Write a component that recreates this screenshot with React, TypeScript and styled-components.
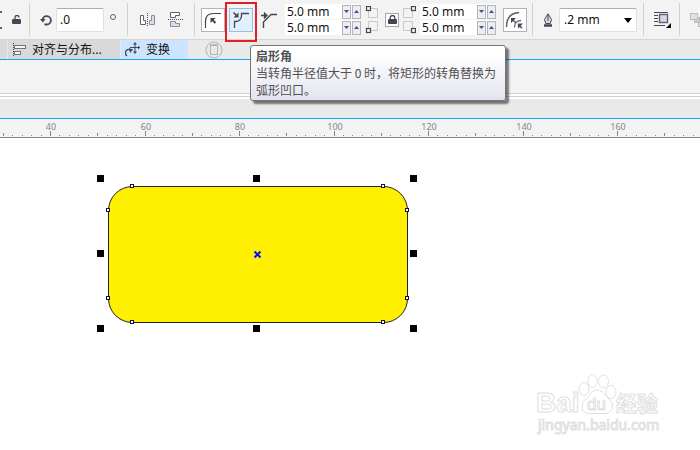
import React, { useEffect, useState } from 'react';
import styled, { createGlobalStyle } from 'styled-components';

const GlobalStyle = createGlobalStyle`
  *, *::before, *::after { box-sizing: border-box; }
  body { margin: 0; background: #fff; }
  svg { display: block; flex: none; }
  button, input, select { font: inherit; color: inherit; margin: 0; }
`;

const Page = styled.div`
  position: relative;
  display: flex;
  flex-direction: column;
  min-height: 100vh;
  overflow: hidden;
  color: #111;
  font-family: 'Noto Sans', 'Noto Sans CJK SC', sans-serif;
  font-size: 12px;
`;

const Toolbar = styled.header`
  display: flex;
  height: 40px;
  background: #f3f3f3;
  border-bottom: 1px solid #d4d4d4;
`;

const Group = styled.div<{ $left?: number; $right?: number; $gap?: number; $last?: boolean }>`
  position: relative;
  display: flex;
  flex: none;
  align-items: center;
  gap: ${(p) => p.$gap ?? 4}px;
  padding: 0 ${(p) => (p.$right ?? 10) + 1}px 0 ${(p) => p.$left ?? 10}px;

  &::after {
    content: '';
    position: absolute;
    display: ${(p) => (p.$last ? 'none' : 'block')};
    right: 0;
    top: 3px;
    bottom: 3px;
    width: 1px;
    background: #d2d2d2;
  }
`;

const Cluster = styled.div`
  display: flex;
  align-items: center;
  gap: 7px;
`;

const IconButton = styled.button`
  display: flex;
  flex: none;
  padding: 0;
  border: 0;
  background: none;
`;

const CornerButton = styled.button<{ $look?: 'framed' | 'active' | 'plain' }>`
  display: grid;
  place-items: center;
  flex: none;
  width: 24px;
  height: 24px;
  padding: 0;
  border: 1px solid
    ${(p) => (p.$look === 'active' ? '#90c0e8' : p.$look === 'framed' ? '#b4b4b8' : 'transparent')};
  background: ${(p) => (p.$look === 'active' ? '#e2f0fd' : p.$look === 'framed' ? '#fff' : 'none')};
`;

const Highlight = styled.div`
  position: relative;

  &::after {
    content: '';
    position: absolute;
    left: -4px;
    right: -4px;
    top: -6px;
    bottom: -10px;
    border: 2px solid #e81c24;
    pointer-events: none;
  }
`;

const AngleInput = styled.input`
  width: 48px;
  height: 24px;
  padding: 0 3px;
  border: 1px solid #dde1e6;
  border-top-color: #aaadb4;
  border-radius: 2px;
  background: #fff;
`;

const SpinStack = styled.div`
  display: flex;
  flex-direction: column;
  gap: 1px;
  width: 76px;
`;

const Spin = styled.div`
  display: flex;
  align-items: center;
  gap: 1px;
  height: 15px;
  background: #fff;

  input {
    flex: 1;
    min-width: 0;
    height: 15px;
    padding: 0 0 0 2px;
    border: 0;
    background: none;
  }

  button {
    display: grid;
    place-items: center;
    width: 9px;
    height: 14px;
    padding: 0;
    border: 1px solid #b4b4bc;
    background: #eeeef2;
  }
`;

const LockButton = styled.button`
  display: grid;
  place-items: center;
  width: 14px;
  height: 14px;
  padding: 0;
  border: 1px solid #a6a6ac;
  background: #fff;
`;

const SelectBox = styled.div`
  position: relative;

  select {
    display: block;
    width: 78px;
    height: 24px;
    padding: 0 20px 0 4px;
    appearance: none;
    border: 1px solid #dde1e6;
    border-top-color: #aaadb4;
    border-radius: 2px;
    background: #fff;
  }

  svg {
    position: absolute;
    right: 5px;
    top: 10px;
    pointer-events: none;
  }
`;

const TabBar = styled.nav`
  display: flex;
  align-items: stretch;
  height: 20px;
  background: #e9e9e9;
  border-bottom: 1px solid #18a4ee;
`;

const TabStub = styled.div`
  width: 7px;
  margin-right: 1px;
  background: #d9d9d9;
`;

const Tab = styled.button<{ $active?: boolean }>`
  display: flex;
  align-items: center;
  gap: 6px;
  width: ${(p) => (p.$active ? 67 : 112)}px;
  margin-right: 1px;
  padding: 0 4px;
  border: 0;
  background: ${(p) => (p.$active ? '#cce4ff' : '#d9d9d9')};
  line-height: 18px;
  white-space: nowrap;
`;

const NewTab = styled(IconButton)`
  align-self: center;
  margin-left: 16px;
`;

const Tray = styled.div`
  height: 33px;
  background: #f3f3f3;
`;

const Divider = styled.div`
  height: 6px;
  border-top: 1px solid #cfcfcf;
  background: linear-gradient(#fff 2px, #cfcfcf 2px, #cfcfcf 3px, #fff 3px);
`;

const DocBar = styled.div`
  height: 20px;
  background: #e9e9e9;
  border-bottom: 1px solid #18a4ee;
`;

const RulerBar = styled.div`
  height: 19px;
  overflow: hidden;
  background: #f3f3f3;
  border-bottom: 1px solid #868686;
`;

const Canvas = styled.main`
  flex: 1;
  padding: 37px 0 0 97px;
  background: #fff;
`;

const Tooltip = styled.div`
  position: absolute;
  left: 250px;
  top: 45px;
  width: 256px;
  padding: 1px 5px 2px;
  border: 1px solid #747474;
  border-radius: 3px;
  background: linear-gradient(#fff 15%, #e3e4f0);
  box-shadow: 3px 3px 2px rgba(0, 0, 0, 0.5);
  color: #505050;
  font-family: 'Noto Sans CJK SC', sans-serif;
  font-size: 12px;
  line-height: 17px;
  white-space: nowrap;

  p, strong { display: block; margin: 0; }
`;

const Watermark = styled.div`
  position: absolute;
  right: 36px;
  bottom: 10px;
`;

const ink = '#454556';

const SmallLock = ({ closed }: { closed?: boolean }) => (
  <svg width="9" height="9" viewBox="0 0 9 9">
    <path
      d={closed ? 'M2.200 5V2.700a2.300 2.200 0 0 1 4.600 0V5' : 'M3 4V2.500a2 2 0 0 1 4 0'}
      fill="none"
      stroke={ink}
      strokeWidth="1.3"
    />
    <rect x="0" y="4" width="9" height="5" rx="1" fill={ink} />
  </svg>
);

const RotateIcon = () => (
  <svg width="12" height="12" viewBox="0 0 12 12">
    <path d="M2.500 6A4.200 4.200 0 1 1 6.500 10.500H4.500" fill="none" stroke={ink} strokeWidth="1.8" />
    <path d="M0 5h5.600L2.800 8.600z" fill={ink} />
  </svg>
);

const MirrorH = () => (
  <svg width="16" height="14" viewBox="0 0 16 14" fill="none">
    <path d="M.5 2.500h3v5h2v4h-5z" stroke="#606070" fill="#fff" />
    <path d="M14.500 2.500h-3v5h-2v4h5z" stroke="#8c8c9c" fill="#dcdce6" />
    <path d="M7.500 0v14" stroke={ink} strokeDasharray="1 1" />
  </svg>
);

const MirrorV = () => (
  <svg width="16" height="16" viewBox="0 0 16 16" fill="none">
    <path d="M2.500 .5h9v3h-4v2h-5z" stroke="#606070" fill="#fff" />
    <path d="M2.500 14.500h9v-3h-4v-2h-5z" stroke="#8c8c9c" fill="#dcdce6" />
    <path d="M0 7.500h16" stroke={ink} strokeDasharray="1 1" />
  </svg>
);

const RoundCorner = () => (
  <svg width="18" height="18" viewBox="0 0 18 18" fill="none" stroke={ink}>
    <path d="M1.500 17V10.500Q1.500 2.500 9.500 2.500H17" strokeWidth="1.2" />
    <path d="M11.500 12L8.500 9" strokeWidth="2" />
    <path d="M6.500 7h5l-5 5z" fill={ink} stroke="none" />
  </svg>
);

const ScallopCorner = () => (
  <svg width="18" height="18" viewBox="0 0 18 18" fill="none" stroke={ink}>
    <path d="M2.500 17V10.500H4Q9 10 9.500 5V2.500H17" strokeWidth="1.3" />
    <path d="M1.500 1.500L4.500 4.500" strokeWidth="1.600" />
    <path d="M6.500 1.500v5H1.500z" fill={ink} stroke="none" />
  </svg>
);

const ChamferCorner = () => (
  <svg width="18" height="18" viewBox="0 0 18 18" fill="none" stroke={ink}>
    <path d="M3.500 17V11L11 3.500H17" strokeWidth="1.4" />
    <path d="M1 4.500H5M4.500 1.500V7.500" strokeWidth="1.3" />
    <path d="M4 1l4 3.500L4 8z" fill={ink} stroke="none" />
  </svg>
);

const RelativeCorner = () => (
  <svg width="20" height="18" viewBox="0 0 20 18" fill="none" stroke="#606070">
    <path d="M1.500 16C1.500 8 5 2 14 1.500" strokeWidth="1.5" />
    <path d="M9.500 16.500C9.500 12 11 10 16 9.500" strokeWidth="1.3" />
    <path d="M7 8l4 4M13 14l4 3" strokeWidth="1.600" />
    <path d="M6 7h5L6 12zM13 12.500h5L13 17.500z" fill={ink} stroke="none" />
  </svg>
);

const CornerPair = ({ right }: { right?: boolean }) => {
  const x = right ? 8.5 : 0.5;
  const box = right ? 0.5 : 2.5;
  return (
    <svg width={right ? 13 : 16} height="28" viewBox={right ? '0 0 13 28' : '-1 0 16 28'} fill="none">
      <g stroke="#c8c8cc">
        <path d={`M${box} 2.500h9v9h-9z`} />
        <path d={`M${box} 15.500h9v9h-9z`} />
      </g>
      <g stroke={ink} strokeWidth="1.2" fill="#f3f3f3">
        <rect x={x} y=".5" width="4" height="4" />
        <rect x={x} y="22.500" width="4" height="4" />
      </g>
    </svg>
  );
};

const PenIcon = () => (
  <svg width="10" height="14" viewBox="0 0 10 14" fill="none" stroke={ink}>
    <path d="M5 .8L1.500 6.500l1.200 4h4.600l1.200-4z" fill="#dcdce6" />
    <path d="M5 2v6" />
    <path d="M1 12.500h8" strokeWidth="2.500" />
  </svg>
);

const WrapIcon = () => (
  <svg width="18" height="18" viewBox="0 0 18 18">
    <path d="M0 1.500h14M0 4.500h4M0 7.500h4M0 10.500h4M0 14.500h11" stroke={ink} fill="none" />
    <rect x="5.500" y="3.500" width="8" height="8" fill="#d5d8e8" stroke="#606070" strokeWidth="1.4" />
    <path d="M17 12v5h-5z" fill="#000" />
  </svg>
);

const OrderIcon = () => (
  <svg width="16" height="16" viewBox="0 0 16 16" fill="#e0e0e0" stroke="#bcbcbc">
    <rect x="8.500" y="8.500" width="6" height="6" />
    <rect x="4.500" y="5.500" width="5" height="5" fill="#ccc" />
    <rect x=".5" y="1.500" width="7" height="6" />
  </svg>
);

const AlignIcon = () => (
  <svg width="14" height="14" viewBox="0 0 14 14" fill="#f6f6f8" stroke="#707080">
    <path d="M1.500 0v14" stroke={ink} strokeDasharray="1 1" />
    <rect x="2.500" y="2.500" width="11" height="3" />
    <rect x="2.500" y="8.500" width="6" height="3" />
  </svg>
);

const TransformIcon = () => (
  <svg width="15" height="15" viewBox="0 0 15 15" fill="none" stroke={ink}>
    <path d="M2 14Q-.5 12 1 9Q2.500 6.500 5 8" strokeWidth="1.3" />
    <path d="M4 6l4 1.500L5 11z" fill={ink} stroke="none" />
    <path d="M10 1v10M5 5.500h10" />
    <path d="M8 2.500L10 0l2 2.500zM8 9.500l2 2.500 2-2.500zM13 3.500l2 2-2 2z" fill={ink} stroke="none" />
  </svg>
);

const Triangle = ({ up }: { up?: boolean }) => (
  <svg width="5" height="3" viewBox="0 0 5 3" fill="#3c50a0">
    <path d={up ? 'M0 3h5L2.500 0z' : 'M0 0h5L2.500 3z'} />
  </svg>
);

const RadiusField = ({ label }: { label: string }) => (
  <Spin>
    <input aria-label={label} defaultValue="5.0 mm" />
    <button aria-label={`${label} −`}><Triangle /></button>
    <button aria-label={`${label} +`}><Triangle up /></button>
  </Spin>
);

const unit = 4.725;

function useWindowWidth() {
  const [width, setWidth] = useState(window.innerWidth);
  useEffect(() => {
    const update = () => setWidth(window.innerWidth);
    window.addEventListener('resize', update);
    return () => window.removeEventListener('resize', update);
  }, []);
  return width;
}

const Ruler = () => {
  const width = useWindowWidth();
  const count = Math.floor((width - 3) / (unit * 2)) + 1;
  const ticks = Array.from({ length: count }, (_, i) => 30 + i * 2);
  return (
    <RulerBar>
      <svg width="100%" height="18">
        {ticks.map((v) => {
          const x = Math.round((v - 40) * unit + 50);
          const size = v % 20 === 0 ? 5 : v % 10 === 0 ? 3 : 1;
          return (
            <g key={v}>
              <rect x={x} y={17 - size} width="1" height={size} fill="#868686" />
              {v % 20 === 0 && (
                <text x={x + 1} y="11" textAnchor="middle" fontSize="9" fill="#868686">{v}</text>
              )}
            </g>
          );
        })}
      </svg>
    </RulerBar>
  );
};

const handles = [
  [0, 0], [156, 0], [313, 0], [0, 75], [313, 75], [0, 150], [156, 150], [313, 150],
];
const nodes = [
  [35, 11], [286, 11], [11, 35], [310, 35], [11, 123], [310, 123], [35, 147], [286, 147],
];

const Shape = () => (
  <svg width="320" height="157" viewBox="0 0 320 157">
    <rect x="11.500" y="11.500" width="299" height="136" rx="24" fill="#ffef00" stroke="#222" />
    {handles.map(([x, y]) => (
      <rect key={`${x}-${y}`} x={x} y={y} width="7" height="7" fill="#000" />
    ))}
    {nodes.map(([x, y]) => (
      <rect key={`${x}-${y}`} x={x - 1.5} y={y - 1.5} width="3" height="3" fill="#fff" stroke="#111133" />
    ))}
    <path d="M157.500 76.500l6 6M163.500 76.500l-6 6" stroke="#0010ff" strokeWidth="2" />
  </svg>
);

const BaiduMark = () => (
  <svg width="130" height="70" viewBox="534 370 130 70" fill="#fff" stroke="#e0e0e0">
    <text x="536" y="412" fontSize="28" fontWeight="bold" fontFamily="'Liberation Sans', sans-serif">Bai</text>
    <ellipse cx="584" cy="389" rx="5" ry="6.500" />
    <ellipse cx="592.500" cy="381" rx="4.500" ry="6.500" />
    <ellipse cx="603.500" cy="381.500" rx="5" ry="6.500" />
    <ellipse cx="611" cy="392" rx="5" ry="6.500" />
    <path d="M597 390C603 390 605 396 610 400C615 405 612 413 606 413.500H588C582 413 580 405 585 400C590 396 591 390 597 390Z" />
    <text x="587" y="410" fontSize="17" fontFamily="'Liberation Sans', sans-serif">du</text>
    <text x="616" y="411" fontSize="21" fontWeight="bold" fontFamily="'Noto Sans CJK SC', sans-serif">经验</text>
    <text x="538" y="430" fontSize="14" fontFamily="'Noto Sans', sans-serif">jingyan.baidu.com</text>
  </svg>
);

export default function App() {
  return (
    <Page>
      <GlobalStyle />
      <Toolbar>
        <Group $left={0} $right={8} $gap={10}>
          <svg width="2" height="18" viewBox="0 0 2 18" fill="#606070">
            <path d="M0 0h2v2H0zM0 16h2v2H0z" />
          </svg>
          <IconButton aria-label="锁定比率"><SmallLock /></IconButton>
        </Group>
        <Group $left={10} $right={9}>
          <RotateIcon />
          <AngleInput aria-label="旋转角度" defaultValue=".0" />
          <svg width="10" height="14" viewBox="0 0 10 14">
            <circle cx="5" cy="4" r="2.500" fill="none" stroke="#606070" />
          </svg>
        </Group>
        <Group $left={12} $gap={12}>
          <IconButton aria-label="水平镜像"><MirrorH /></IconButton>
          <IconButton aria-label="垂直镜像"><MirrorV /></IconButton>
        </Group>
        <Group $left={6} $right={5}>
          <CornerButton $look="framed" aria-label="圆角"><RoundCorner /></CornerButton>
          <Highlight>
            <CornerButton $look="active" aria-label="扇形角"><ScallopCorner /></CornerButton>
          </Highlight>
          <CornerButton $look="plain" aria-label="倒棱角"><ChamferCorner /></CornerButton>
          <SpinStack>
            <RadiusField label="左上角半径" />
            <RadiusField label="左下角半径" />
          </SpinStack>
          <CornerPair />
          <LockButton aria-label="同时编辑所有角"><SmallLock closed /></LockButton>
          <CornerPair right />
          <Cluster>
            <SpinStack>
              <RadiusField label="右上角半径" />
              <RadiusField label="右下角半径" />
            </SpinStack>
            <CornerButton $look="framed" aria-label="相对的角缩放"><RelativeCorner /></CornerButton>
          </Cluster>
        </Group>
        <Group $right={6} $gap={6}>
          <PenIcon />
          <SelectBox>
            <select aria-label="轮廓宽度" defaultValue=".2 mm">
              <option>.2 mm</option>
              <option>.5 mm</option>
            </select>
            <svg width="8" height="5" viewBox="0 0 8 5"><path d="M0 0h8L4 5z" /></svg>
          </SelectBox>
        </Group>
        <Group $right={7}>
          <IconButton aria-label="文本换行"><WrapIcon /></IconButton>
        </Group>
        <Group $last>
          <IconButton aria-label="到图层前面"><OrderIcon /></IconButton>
        </Group>
      </Toolbar>
      <TabBar>
        <TabStub />
        <Tab><AlignIcon />对齐与分布...</Tab>
        <Tab $active><TransformIcon />变换</Tab>
        <NewTab aria-label="泊坞窗">
          <svg width="18" height="18" viewBox="0 0 18 18" fill="none" stroke="#b4b4b4">
            <circle cx="9" cy="9" r="8" />
            <rect x="5.500" y="4.500" width="7" height="9" />
            <path d="M5 3.500h8" stroke="#c4b8a4" />
          </svg>
        </NewTab>
      </TabBar>
      <Tray />
      <Divider />
      <DocBar />
      <Ruler />
      <Canvas>
        <Shape />
      </Canvas>
      <Tooltip role="tooltip">
        <strong>扇形角</strong>
        <p>当转角半径值大于 0 时，将矩形的转角替换为<br />弧形凹口。</p>
      </Tooltip>
      <Watermark><BaiduMark /></Watermark>
    </Page>
  );
}
